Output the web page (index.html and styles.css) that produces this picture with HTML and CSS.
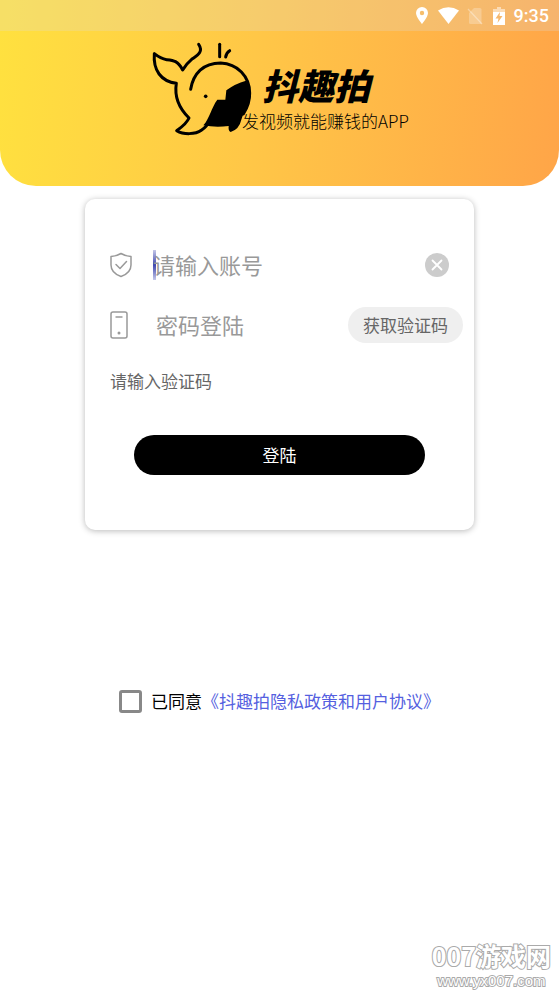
FILE: index.html
```html
<!DOCTYPE html>
<html lang="zh-CN">
<head>
<meta charset="utf-8">
<meta name="viewport" content="width=device-width, initial-scale=1">
<title>抖趣拍</title>
<link rel="stylesheet" href="styles.css">
</head>
<body>
<header class="hero">
  <div class="status">
    <svg class="status-pin" viewBox="0 0 12 18" width="12" height="18" aria-hidden="true"><path fill="#fff" fill-rule="evenodd" d="M6 0a6 6 0 0 1 6 6c0 4-6 11-6 11S0 10 0 6a6 6 0 0 1 6-6zm0 3.800a2.200 2.200 0 1 0 0 4.400 2.200 2.200 0 0 0 0-4.400z"/></svg>
    <svg class="status-wifi" viewBox="0 0 21 18" width="21" height="18" aria-hidden="true"><path fill="#fff" d="M0 3.500Q10.500-3 21 3.500L10.500 17z"/></svg>
    <svg class="status-sim" viewBox="0 0 16 18" width="16" height="18" aria-hidden="true"><path fill="#fff" opacity=".25" d="M7 1h6q1.500 0 1.500 1.500V17H3.500q-1.500 0-1.500-1.500V6z"/><path d="M1 2l14 15" stroke="#fff" stroke-opacity=".35" stroke-width="1.300"/></svg>
    <svg class="status-battery" viewBox="0 0 12 18" width="12" height="18" aria-hidden="true"><path fill="#fff" opacity=".5" d="M4 0h4v2h4v3H0V2h4z"/><path fill="#fff" fill-rule="evenodd" d="M0 5h12v13H0zM7 5L2.500 11.500H5.500L4.500 16 9.500 9H6.500z"/></svg>
    <time class="clock">9:35</time>
  </div>
  <div class="brand">
    <svg class="whale" viewBox="30 15 306 291" width="102" height="97" aria-hidden="true">
      <g fill="none" stroke="#000" stroke-width="9" stroke-linecap="round" stroke-linejoin="round">
        <path d="M176 28C192 52 170 62 155 73Q139 86 128 105C114 77 100 76 80 74Q62 71 43 56C39 106 63 139 109 145C102 190 119 222 147 249C139 267 125 276 110 287C130 299 166 299 184 286Q201 275 211 254"/>
        <path d="M152 163C160 115 190 84 242 84C292 86 329 124 329 174C330 202 320 221 310 237"/>
        <path d="M239 28V65"/><path d="M269 47Q259 53 257 66"/>
      </g>
      <path d="M318 137Q330 154 330 176C329 211 310 231 304 254Q298 282 272 291Q264 288 266 273Q226 278 190 271C209 250 214 218 232 194H256L259 166Q285 146 318 137z"/>
      <circle cx="197" cy="184" r="5.500"/>
    </svg>
    <div class="brand-text">
      <h1 class="brand-name">抖趣拍</h1>
      <p class="tagline">发视频就能赚钱的APP</p>
    </div>
  </div>
</header>
<main class="content">
  <form class="card">
    <div class="row">
      <label class="icon" for="account" aria-label="账号"><svg viewBox="0 0 22 26" width="22" height="26" fill="none" stroke="#999" stroke-width="1.500" stroke-linejoin="round" stroke-linecap="round"><path d="M11 1.500Q7 4 1 4.500V13Q1 21 11 24.500 21 21 21 13V4.500Q15 4 11 1.500z"/><path d="M6 12.500l4 4 6.500-7"/></svg></label>
      <span class="caret"></span>
      <input class="field" id="account" type="text" placeholder="请输入账号">
      <button class="clear" type="button" aria-label="清除"><svg viewBox="0 0 24 24" width="24" height="24"><circle cx="12" cy="12" r="12" fill="#ccc"/><path d="M7.500 7.500l9 9m0-9l-9 9" stroke="#fff" stroke-width="1.800" stroke-linecap="round"/></svg></button>
    </div>
    <div class="row">
      <label class="icon" for="password" aria-label="密码"><svg viewBox="0 0 18 28" width="18" height="28" fill="none" stroke="#999" stroke-width="1.500"><rect x="1" y="1" width="16" height="26" rx="2"/><path d="M5.500 6h7"/><circle cx="9" cy="22" r="1.500" fill="#999" stroke="none"/></svg></label>
      <input class="field field-password" id="password" type="password" placeholder="密码登陆">
      <button class="send-code" type="button">获取验证码</button>
    </div>
    <input class="code" type="text" placeholder="请输入验证码" aria-label="验证码">
    <button class="login" type="submit">登陆</button>
  </form>
  <div class="agreement">
    <input class="tick" id="agree" type="checkbox">
    <label for="agree">已同意</label><a class="terms" href="#">《抖趣拍隐私政策和用户协议》</a>
  </div>
</main>
<footer class="site-mark">
  <div class="site-name">007游戏网</div>
  <div class="site-url">www.yx007.com</div>
</footer>
</body>
</html>
```
FILE: styles.css
```css
* {
  box-sizing: border-box;
}

body {
  margin: 0;
  min-height: 100vh;
  display: flex;
  flex-direction: column;
  background: #fff;
  color: #000;
  font-family: "Noto Sans CJK SC", sans-serif;
  font-size: 17px;
  line-height: 24px;
}

input,
button {
  margin: 0;
  padding: 0;
  border: 0;
  background: none;
  font: inherit;
}

.hero {
  padding-bottom: 49px;
  border-radius: 0 0 36px 36px;
  background: linear-gradient(95deg, #ffe13f, #ffc747 45%, #ffa548);
  overflow: hidden;
}

.status {
  display: flex;
  align-items: center;
  justify-content: flex-end;
  height: 31px;
  padding-right: 10px;
  background: rgba(220, 220, 220, 0.25);
}

.status-wifi {
  margin-left: 10px;
}

.status-sim {
  margin-left: 8px;
}

.status-battery {
  margin-left: 10px;
}

.clock {
  margin-left: 9px;
  color: #fff;
  font-family: Roboto, sans-serif;
  font-size: 18px;
  font-weight: 500;
}

.brand {
  display: flex;
  justify-content: center;
  padding-top: 9px;
}

.brand-text {
  margin: 26px 0 0 -10px;
}

.brand-name {
  margin: 0 0 0 20px;
  font-size: 36px;
  font-weight: 900;
  font-style: italic;
  line-height: 36px;
}

.tagline {
  margin: 6px 0 0;
  font-size: 17px;
  font-weight: 300;
  line-height: 26px;
}

.content {
  padding: 13px 85px 0;
}

.card {
  display: flex;
  flex-direction: column;
  padding: 36px 11px 55px 25px;
  border-radius: 10px;
  background: #fff;
  box-shadow: 0 1px 6px rgba(0, 0, 0, 0.28);
}

.row {
  display: flex;
  align-items: center;
  height: 60px;
}

.icon {
  flex: none;
  display: flex;
  width: 43px;
}

.caret {
  width: 3px;
  height: 30px;
  margin-right: -3px;
  background: linear-gradient(#c5c8e8, #3f48b0, #c5c8e8);
}

.field {
  flex: 1;
  min-width: 0;
  height: 34px;
  padding-bottom: 2px;
  font-size: 22px;
}

.field-password {
  padding-left: 3px;
}

.field::placeholder {
  color: #999;
}

.clear {
  display: flex;
  margin-right: 14px;
}

.send-code {
  flex: none;
  height: 36px;
  padding: 0 15px;
  border-radius: 18px;
  background: #efefef;
  color: #666;
}

.code {
  height: 24px;
  margin-top: 14px;
}

.code::placeholder {
  color: #666;
}

.login {
  height: 40px;
  margin: 42px 38px 0 24px;
  border-radius: 20px;
  background: #000;
  color: #fff;
}

.agreement {
  display: flex;
  align-items: center;
  justify-content: center;
  margin: 159px -30px 0;
  white-space: nowrap;
}

.tick {
  appearance: none;
  width: 23px;
  height: 23px;
  margin-right: 9px;
  border: 3px solid #888;
  border-radius: 3px;
}

.terms {
  color: #555fe0;
  text-decoration: none;
}

.site-mark {
  margin-top: auto;
  padding: 0 8px 4px;
  align-self: flex-end;
  text-align: center;
  color: #fff;
  -webkit-text-stroke: 2px #aaa;
  paint-order: stroke fill;
}

.site-name {
  font-size: 25px;
  font-weight: 700;
  line-height: 34px;
}

.site-url {
  font-family: "Liberation Sans", sans-serif;
  font-size: 15px;
  line-height: 18px;
}
```
